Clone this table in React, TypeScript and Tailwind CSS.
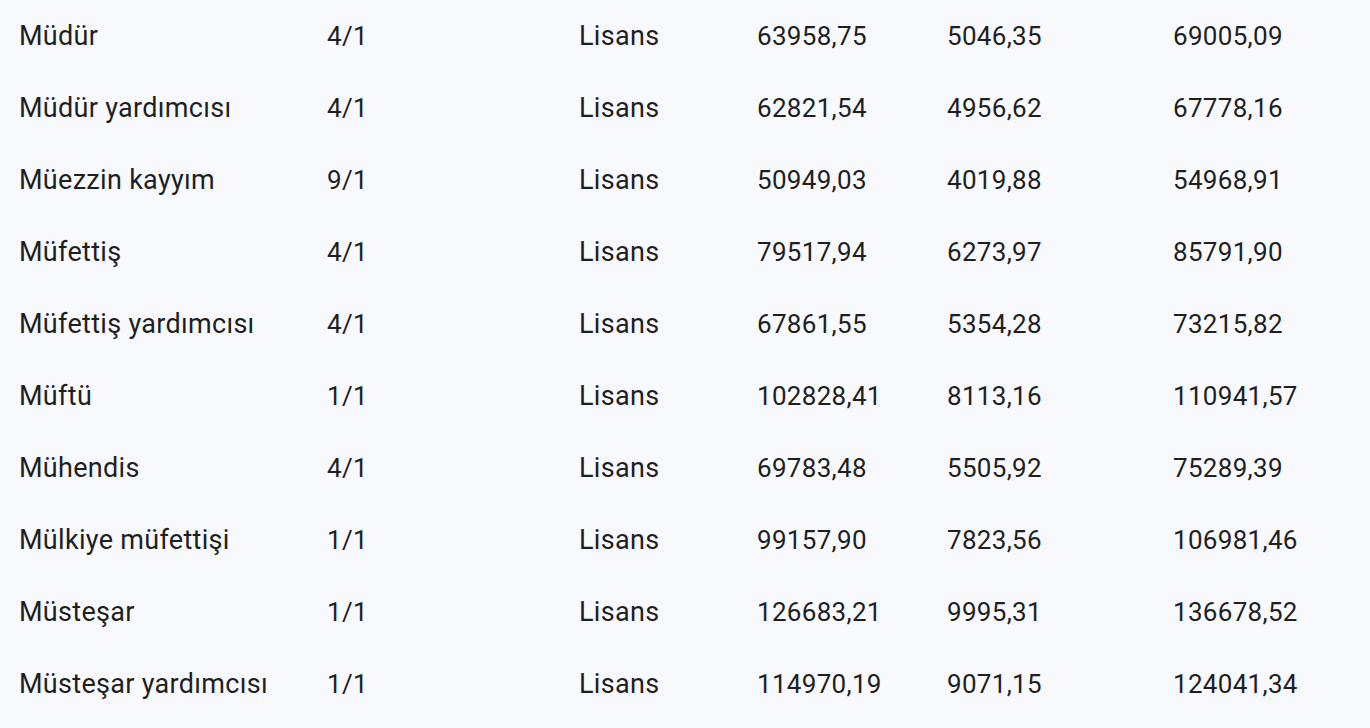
import React from 'react';

const rows: string[][] = [
  ['Müdür', '4/1', 'Lisans', '63958,75', '5046,35', '69005,09'],
  ['Müdür yardımcısı', '4/1', 'Lisans', '62821,54', '4956,62', '67778,16'],
  ['Müezzin kayyım', '9/1', 'Lisans', '50949,03', '4019,88', '54968,91'],
  ['Müfettiş', '4/1', 'Lisans', '79517,94', '6273,97', '85791,90'],
  ['Müfettiş yardımcısı', '4/1', 'Lisans', '67861,55', '5354,28', '73215,82'],
  ['Müftü', '1/1', 'Lisans', '102828,41', '8113,16', '110941,57'],
  ['Mühendis', '4/1', 'Lisans', '69783,48', '5505,92', '75289,39'],
  ['Mülkiye müfettişi', '1/1', 'Lisans', '99157,90', '7823,56', '106981,46'],
  ['Müsteşar', '1/1', 'Lisans', '126683,21', '9995,31', '136678,52'],
  ['Müsteşar yardımcısı', '1/1', 'Lisans', '114970,19', '9071,15', '124041,34'],
];

// text columns a touch larger than the figures
const colClass = ['text-[27px]', 'text-[26px]', 'text-[27px]', 'text-[26px]', 'text-[26px]', 'text-[26px]'];

export default function App() {
  return (
    <div className="min-h-screen bg-[#f8f9fd] text-[#1f1f1f] font-['Roboto',sans-serif] overflow-hidden">
      <div className="pl-[19px]">
        {rows.map((r, i) => (
          <div key={i} className="grid grid-cols-[308px_252px_178px_190px_226px_1fr] h-[72px] items-center tracking-[0.3px]">
            {r.map((c, j) => (
              <div key={j} className={colClass[j]}>{c}</div>
            ))}
          </div>
        ))}
      </div>
    </div>
  );
}
